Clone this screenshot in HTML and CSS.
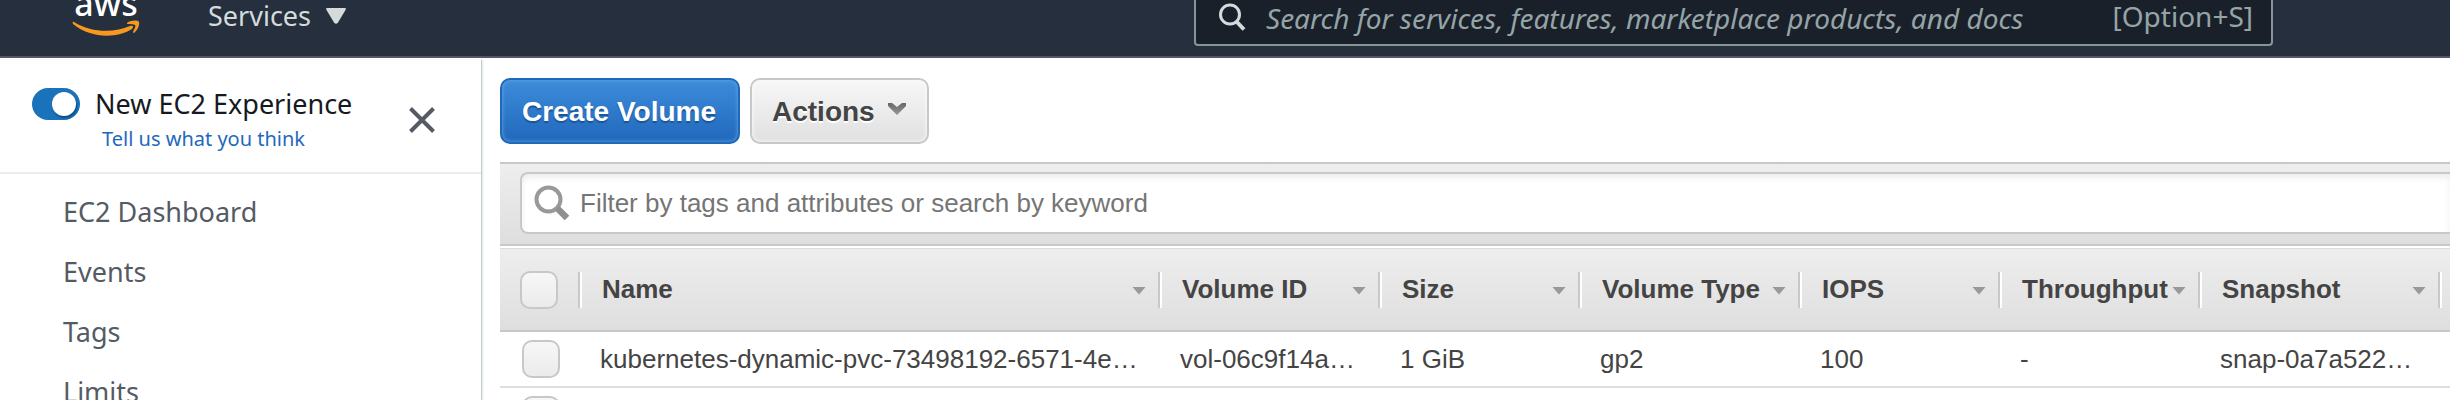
FILE: index.html
```html
<!DOCTYPE html>
<html lang="en">
<head>
<meta charset="utf-8">
<title>Volumes | EC2 Management Console</title>
<link rel="stylesheet" href="styles.css">
</head>
<body>
<header class="topbar">
  <a class="logo" href="#" aria-label="AWS home">
    <svg width="68" height="38" viewBox="0 0 68 38">
      <text class="logo-text" x="34" y="16" text-anchor="middle">aws</text>
      <path fill="#f7981f" d="M2 22C20 33 42 33 58 26C61 25 62 27 60 29C44 39 18 38 1 24C0 22 1 21.500 2 22Z"/>
      <path fill="#f7981f" d="M55 23C59 20 66 20 67 22C68 25 65 31 62 33C61 33 61 32 61 32C63 28 64 26 63 25C62 24 59 24 55 24Z"/>
    </svg>
  </a>
  <button class="services" type="button">Services
    <svg width="20" height="16" viewBox="0 0 20 16"><path fill="#d5dbdb" d="M1 0H19Q20.500 0 19.500 2L12 14.500Q10 17 8 14.500L.5 2Q-.5 0 1 0Z"/></svg>
  </button>
  <label class="search">
    <svg width="28" height="28" viewBox="0 0 28 28"><ellipse cx="12" cy="11.500" rx="9.500" ry="9.500" fill="none" stroke="#d5dbdb" stroke-width="3"/><path d="M18 18L26 26.500" stroke="#d5dbdb" stroke-width="4"/></svg>
    <input class="search-input" type="text" aria-label="Search" placeholder="Search for services, features, marketplace products, and docs">
    <span class="shortcut">[Option+S]</span>
  </label>
</header>
<div class="shell">
  <aside class="sidebar">
    <div class="experience">
      <input class="toggle" type="checkbox" id="new-experience" checked>
      <div class="experience-text">
        <label for="new-experience">New EC2 Experience</label>
        <a href="#">Tell us what you think</a>
      </div>
      <button class="close" type="button" aria-label="Close navigation">
        <svg width="28" height="28" viewBox="0 0 28 28"><path d="M2.500 2.500L25.500 25.500M25.500 2.500L2.500 25.500" stroke="#545b64" stroke-width="4"/></svg>
      </button>
    </div>
    <nav class="nav">
      <a href="#">EC2 Dashboard</a>
      <a href="#">Events</a>
      <a href="#">Tags</a>
      <a href="#">Limits</a>
    </nav>
  </aside>
  <main class="content">
    <div class="actions">
      <button class="btn btn-primary" type="button">Create Volume</button>
      <button class="btn btn-default" type="button">Actions
        <svg width="20" height="14" viewBox="0 0 20 14"><defs><linearGradient id="chevron" x2="0" y2="1"><stop offset="0" stop-color="#666"/><stop offset="1" stop-color="#999"/></linearGradient></defs><path fill="url(#chevron)" d="M1 1H5L10 5L15 1H19V4L10 13L1 4Z"/></svg>
      </button>
    </div>
    <div class="filter">
      <label class="filter-box">
        <svg width="36" height="36" viewBox="0 0 36 36"><circle cx="14.500" cy="14.500" r="12" fill="none" stroke="#999" stroke-width="4"/><path d="M23 23L33 33" stroke="#909090" stroke-width="6.500"/></svg>
        <input class="filter-input" type="text" aria-label="Filter volumes" placeholder="Filter by tags and attributes or search by keyword">
      </label>
    </div>
    <table class="volumes">
      <colgroup><col class="w-check"><col class="w-name"><col class="w-m"><col class="w-s"><col class="w-m"><col class="w-s"><col class="w-s"><col class="w-l"><col></colgroup>
      <thead>
        <tr>
          <th><div class="head head-check"><input class="check" type="checkbox" aria-label="Select all"></div></th>
          <th><div class="head">Name<i class="sort"></i></div></th>
          <th><div class="head">Volume ID<i class="sort"></i></div></th>
          <th><div class="head">Size<i class="sort"></i></div></th>
          <th><div class="head">Volume Type<i class="sort"></i></div></th>
          <th><div class="head">IOPS<i class="sort"></i></div></th>
          <th><div class="head">Throughput<i class="sort"></i></div></th>
          <th><div class="head">Snapshot<i class="sort"></i></div></th>
          <th></th>
        </tr>
      </thead>
      <tbody>
        <tr>
          <td class="cell-check"><input class="check" type="checkbox" aria-label="Select volume"></td>
          <td>kubernetes-dynamic-pvc-73498192-6571-4e…</td>
          <td>vol-06c9f14a…</td>
          <td>1 GiB</td>
          <td>gp2</td>
          <td>100</td>
          <td>-</td>
          <td>snap-0a7a522…</td>
          <td></td>
        </tr>
        <tr>
          <td class="cell-check"><input class="check" type="checkbox" aria-label="Select volume"></td>
          <td></td><td></td><td></td><td></td><td></td><td></td><td></td><td></td>
        </tr>
      </tbody>
    </table>
  </main>
</div>
</body>
</html>
```
FILE: styles.css
```css
* { box-sizing: border-box; }
body {
  margin: 0;
  height: 100vh;
  overflow: hidden;
  display: flex;
  flex-direction: column;
  background: #fff;
  color: #444;
  font-family: "Liberation Sans", Arial, sans-serif;
  font-size: 26px;
}
button, input { font: inherit; color: inherit; }
button { border: 0; padding: 0; background: none; cursor: pointer; }
a { text-decoration: none; }
svg { display: block; flex: none; }

.topbar {
  flex: none;
  display: flex;
  align-items: flex-start;
  height: 58px;
  padding-left: 72px;
  padding-right: 177px;
  border-bottom: 2px solid #545664;
  background: #252f3e;
  color: #d5dbdb;
  font-family: "Noto Sans", sans-serif;
  overflow: hidden;
}
.logo-text { fill: #fff; font-size: 34px; font-weight: 500; }
.services {
  display: flex;
  align-items: center;
  gap: 15px;
  margin-left: 68px;
  font-size: 27px;
  line-height: 32px;
}
.search {
  display: flex;
  align-items: flex-start;
  width: 1079px;
  height: 46px;
  margin-left: auto;
  padding: 0 18px 0 22px;
  border: 2px solid #879596;
  border-top: 0;
  border-radius: 0 0 4px 4px;
  background: #1a202a;
  color: #95a5a6;
  font-size: 28px;
}
.search svg { margin-top: 3px; }
.search-input {
  flex: 1;
  min-width: 0;
  height: 36px;
  margin: 0 0 0 20px;
  padding: 0;
  border: 0;
  outline: 0;
  background: none;
  font-style: italic;
}
.search-input::placeholder { color: #95a5a6; }
.shortcut { line-height: 32px; }

.shell { flex: 1; display: flex; min-height: 0; }
.sidebar {
  flex: none;
  width: 482px;
  margin-top: 2px;
  border-right: 1px solid #c3cacd;
  box-shadow: 1px 0 2px #e4e8ea;
  font-family: "Noto Sans", sans-serif;
  color: #545b64;
}
.experience {
  display: flex;
  align-items: flex-start;
  height: 114px;
  padding: 28px 45px 0 32px;
  border-bottom: 2px solid #eaeded;
}
.toggle {
  appearance: none;
  flex: none;
  width: 48px;
  height: 32px;
  margin: 0;
  border-radius: 16px;
  background: #1a73ba;
}
.toggle::before {
  content: "";
  display: block;
  width: 24px;
  height: 24px;
  margin: 4px 0 0 20px;
  border-radius: 50%;
  background: #fff;
  box-shadow: 1px 2px 2px #0b4a80;
}
.experience-text {
  flex: 1;
  display: flex;
  flex-direction: column;
  padding-left: 15px;
}
.experience-text label { color: #16191f; font-size: 27px; line-height: 32px; }
.experience-text a { padding-left: 7px; color: #1f69bd; font-size: 20px; line-height: 38px; white-space: nowrap; }
.close { margin-top: 18px; }
.nav { display: flex; flex-direction: column; padding: 8px 0 0 63px; font-size: 27px; }
.nav a { color: #545b64; line-height: 60px; }

.content { flex: 1; min-width: 0; padding: 20px 0 0 18px; }
.actions { display: flex; gap: 10px; }
.btn {
  display: flex;
  align-items: center;
  height: 66px;
  padding: 2px 20px 0;
  border: 2px solid #c8c8c8;
  border-radius: 10px;
  font-size: 28px;
  font-weight: 700;
}
.btn-primary {
  padding-right: 22px;
  border-color: #1f69b9;
  background: linear-gradient(#3d8bdb, #2068bb);
  box-shadow: inset 0 0 4px #6aa9e8;
  color: #fff;
  text-shadow: 0 2px 1px #1c5496;
}
.btn-default {
  gap: 12px;
  background: linear-gradient(#f7f7f7, #e0e0e0);
  box-shadow: inset 0 0 4px #fff;
  text-shadow: 0 2px 0 #fff;
}
.btn-default svg { margin-bottom: 6px; }
.filter {
  margin-top: 18px;
  padding: 8px 0 10px 20px;
  border: solid #c8c8c8;
  border-width: 2px 0;
  background: linear-gradient(#eee, #dedede);
}
.filter-box {
  display: flex;
  align-items: center;
  gap: 10px;
  height: 62px;
  padding-left: 12px;
  border: 2px solid #c8c8c8;
  border-right: 0;
  border-radius: 8px 0 0 8px;
  background: #fff;
  box-shadow: inset 0 4px 6px #eee;
}
.filter-input {
  flex: 1;
  min-width: 0;
  padding: 0;
  border: 0;
  outline: 0;
  background: none;
}
.filter-input::placeholder { color: #757575; }

.volumes {
  width: 100%;
  margin-top: 2px;
  table-layout: fixed;
  border-collapse: separate;
  border-spacing: 0;
}
.w-check { width: 82px; }
.w-name { width: 580px; }
.w-s { width: 200px; }
.w-m { width: 220px; }
.w-l { width: 240px; }
.volumes thead { background: linear-gradient(#eee, #dedede); }
.volumes th {
  height: 84px;
  padding: 0;
  border-top: 1px solid #dcdcdc;
  border-bottom: 2px solid #c8c8c8;
  text-align: left;
}
.head {
  display: flex;
  align-items: center;
  justify-content: space-between;
  height: 36px;
  padding: 0 14px 0 20px;
  border-right: 2px solid #fff;
  box-shadow: inset -2px 0 #c8c8c8;
  white-space: nowrap;
}
.sort {
  width: 14px;
  height: 8px;
  margin-top: 2px;
  background: #999;
  clip-path: polygon(0 0, 100% 0, 50% 100%);
}
.check {
  appearance: none;
  flex: none;
  display: block;
  width: 38px;
  height: 38px;
  margin: 0;
  border: 2px solid #c8c8c8;
  border-radius: 10px;
  background: linear-gradient(#f7f7f7, #ebebeb);
}
.volumes td {
  height: 56px;
  padding: 0 0 0 18px;
  border-bottom: 2px solid #dedede;
  white-space: nowrap;
}
.volumes .cell-check { padding-left: 22px; }
```
